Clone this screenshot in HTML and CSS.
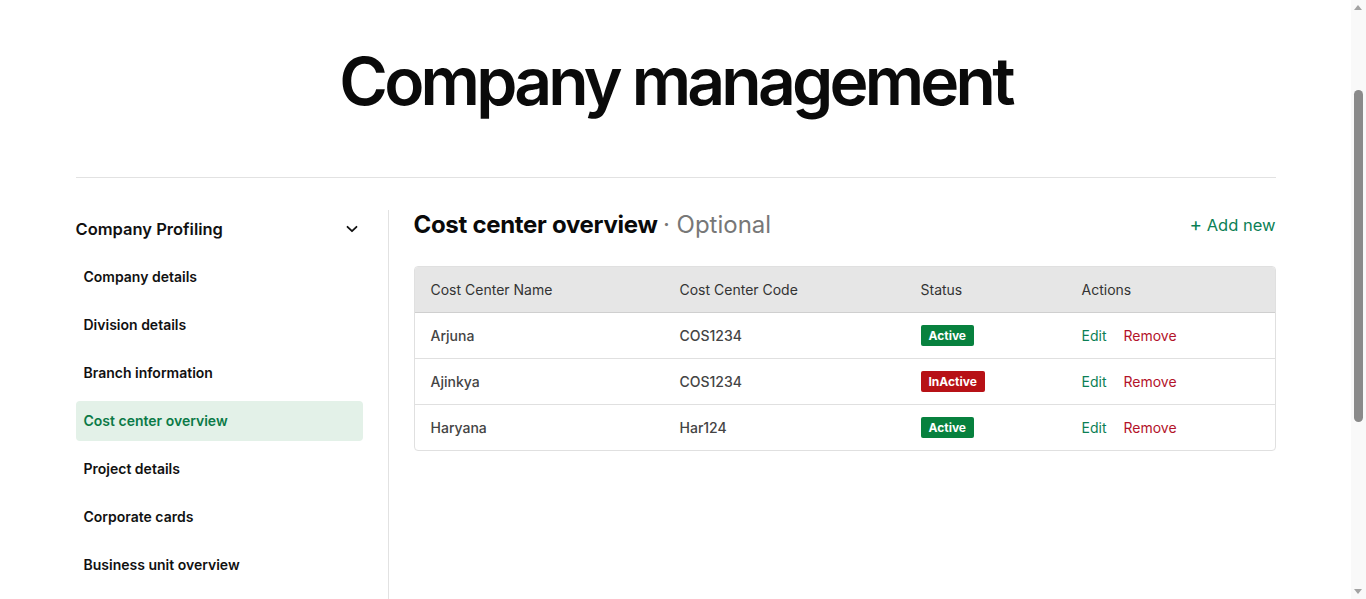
FILE: index.html
```html
<!DOCTYPE html>
<html lang="en">
<head>
<meta charset="utf-8">
<title>Company management</title>
<link rel="stylesheet" href="styles.css">
</head>
<body>
<div class="page">
  <h1 class="title">Company management</h1>
  <div class="divider"></div>
  <div class="layout">
    <aside class="sidebar">
      <div class="group-head">
        <span>Company Profiling</span>
        <svg class="chev" width="14" height="14" viewBox="0 0 14 14"><path d="M2.5 4.8 L7 9.2 L11.5 4.8" fill="none" stroke="#111" stroke-width="1.8" stroke-linecap="round" stroke-linejoin="round"/></svg>
      </div>
      <nav class="nav">
        <a class="nav-item">Company details</a>
        <a class="nav-item">Division details</a>
        <a class="nav-item">Branch information</a>
        <a class="nav-item active">Cost center overview</a>
        <a class="nav-item">Project details</a>
        <a class="nav-item">Corporate cards</a>
        <a class="nav-item">Business unit overview</a>
      </nav>
    </aside>
    <main class="content">
      <div class="content-head">
        <h2 class="section-title">Cost center overview <span class="optional">· Optional</span></h2>
        <a class="add-new"><span class="plus">+</span> Add new</a>
      </div>
      <div class="table">
        <div class="row head">
          <div class="c c1">Cost Center Name</div>
          <div class="c c2">Cost Center Code</div>
          <div class="c c3">Status</div>
          <div class="c c4">Actions</div>
        </div>
        <div class="row">
          <div class="c c1 strong">Arjuna</div>
          <div class="c c2 strong">COS1234</div>
          <div class="c c3"><span class="badge active-b">Active</span></div>
          <div class="c c4"><a class="edit">Edit</a><a class="remove">Remove</a></div>
        </div>
        <div class="row">
          <div class="c c1 strong">Ajinkya</div>
          <div class="c c2 strong">COS1234</div>
          <div class="c c3"><span class="badge inactive-b">InActive</span></div>
          <div class="c c4"><a class="edit">Edit</a><a class="remove">Remove</a></div>
        </div>
        <div class="row last">
          <div class="c c1 strong">Haryana</div>
          <div class="c c2 strong">Har124</div>
          <div class="c c3"><span class="badge active-b">Active</span></div>
          <div class="c c4"><a class="edit">Edit</a><a class="remove">Remove</a></div>
        </div>
      </div>
    </main>
  </div>
</div>
<div class="scrollbar" aria-hidden="true">
  <span class="arrow up"></span>
  <span class="thumb"></span>
  <span class="arrow down"></span>
</div>
</body>
</html>
```
FILE: styles.css
```css
* { box-sizing: border-box; }
html, body { margin: 0; padding: 0; background: #fff; height: 100%; overflow: hidden; }
body {
  font-family: Inter, "Noto Sans", sans-serif;
  color: #111;
  padding-right: 15px;
}
.page {
  width: 1200px;
  margin: 0 auto;
  height: 100%;
  display: flex;
  flex-direction: column;
}
.title {
  margin: 0;
  padding-top: 39px;
  height: 177px;
  text-align: center;
  font-size: 66px;
  font-weight: 600;
  letter-spacing: -3.8px;
  line-height: 84px;
  color: #0a0a0a;
  flex: none;
}
.divider {
  height: 1px;
  background: #e2e2e2;
  flex: none;
}
.layout {
  display: flex;
  padding-top: 32px;
  flex: 1;
}
.sidebar {
  width: 313px;
  padding-right: 25px;
  border-right: 1px solid #e2e2e2;
}
.group-head {
  display: flex;
  align-items: center;
  justify-content: space-between;
  height: 38px;
  font-size: 16.5px;
  font-weight: 600;
  color: #111;
  padding-right: 4px;
}
.chev { display: block; }
.nav {
  display: flex;
  flex-direction: column;
  gap: 8px;
  padding-top: 9px;
}
.nav-item {
  display: block;
  height: 40px;
  line-height: 40px;
  padding-left: 8px;
  border-radius: 4px;
  font-size: 14px;
  font-weight: 600;
  color: #111;
}
.nav-item.active {
  background: #e3f1e8;
  color: #0b7a47;
}
.content {
  flex: 1;
  padding-left: 25px;
}
.content-head {
  display: flex;
  align-items: center;
  justify-content: space-between;
  height: 29px;
  margin-bottom: 27px;
}
.section-title {
  margin: 0;
  font-size: 24px;
  font-weight: 700;
  letter-spacing: -0.3px;
  color: #0a0a0a;
}
.optional {
  font-weight: 400;
  color: #777;
  letter-spacing: 0;
}
.add-new {
  font-size: 16.5px;
  color: #0b7f55;
}
.plus { font-size: 19px; }
.table {
  border: 1px solid #e0e0e0;
  border-radius: 4px;
  overflow: hidden;
}
.row {
  display: flex;
  align-items: center;
  height: 46px;
  border-bottom: 1px solid #e0e0e0;
  font-size: 14px;
}
.row.last { border-bottom: 0; height: 45px; }
.row.head {
  background: #e6e6e6;
  border-bottom: 1px solid #cfcfcf;
  color: #333;
}
.c { padding-left: 16px; }
.c1 { width: 249px; }
.c2 { width: 241px; }
.c3 { width: 161px; }
.c4 { flex: 1; display: flex; gap: 17px; }
.strong { font-weight: 500; color: #444; }
.badge {
  display: inline-block;
  height: 21px;
  line-height: 21px;
  padding: 0 8px;
  border-radius: 2px;
  font-size: 12px;
  font-weight: 700;
  color: #fff;
}
.active-b { background: #07813e; }
.inactive-b { background: #b71116; }
.edit { color: #0b7f55; }
.remove { color: #b3132a; }

.scrollbar {
  position: fixed;
  top: 0;
  right: 0;
  width: 15px;
  height: 100%;
  background: #f9f9f9;
}
.thumb {
  position: absolute;
  left: 3px;
  top: 90px;
  width: 9px;
  height: 332px;
  border-radius: 5px;
  background: #8a8a8a;
}
.arrow {
  position: absolute;
  left: 3px;
  width: 0;
  height: 0;
  border-left: 4.5px solid transparent;
  border-right: 4.5px solid transparent;
}
.arrow.up { top: 5px; border-bottom: 5px solid #a3a3a3; }
.arrow.down { bottom: 5px; border-top: 5px solid #a3a3a3; }
```
